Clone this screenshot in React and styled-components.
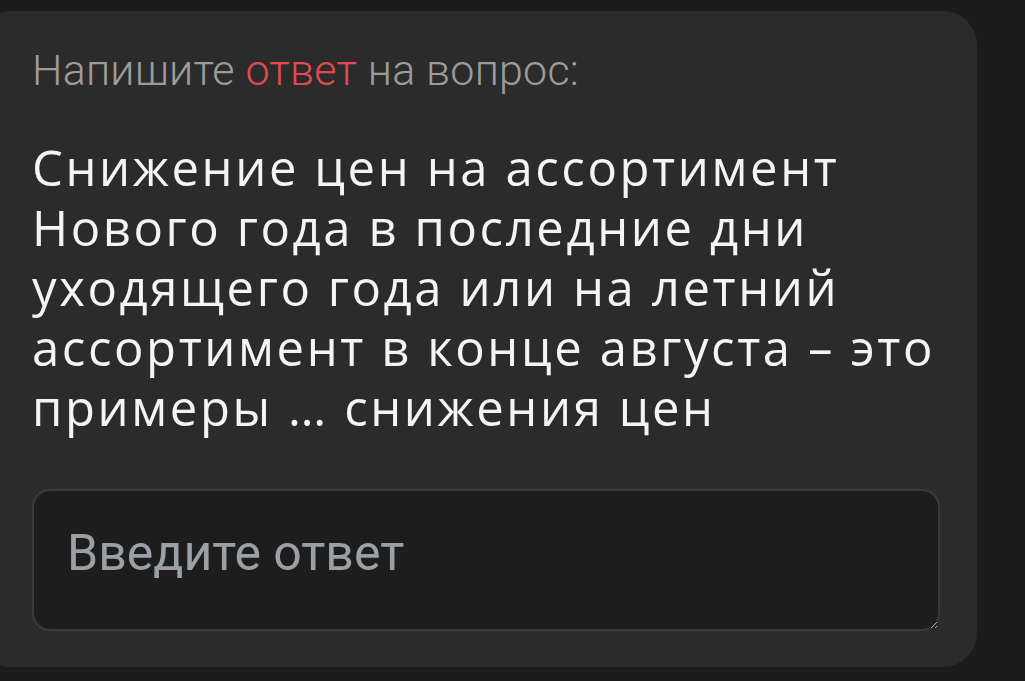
import styled, { createGlobalStyle } from "styled-components";

const GlobalStyle = createGlobalStyle`
  html, body {
    margin: 0;
    padding: 0;
    background: #1c1c1c;
    overflow: hidden;
  }
  #root {
    min-height: 681px;
  }
`;

const Page = styled.div`
  display: flex;
  align-items: flex-start;
  padding: 11px 48px 14px 0;
`;

const Card = styled.section`
  box-sizing: border-box;
  width: 1001px;
  margin-left: -24px;
  padding: 34px 37px 36px 56px;
  background: #2b2b2b;
  border-radius: 34px;
  display: flex;
  flex-direction: column;
`;

const Prompt = styled.div`
  font-family: Roboto, "Liberation Sans", sans-serif;
  font-weight: 300;
  font-size: 43px;
  line-height: 50px;
  letter-spacing: 0.2px;
  color: #9c9c9c;
`;

const Accent = styled.span`
  color: #e34a4f;
`;

const Question = styled.p`
  margin: 42px 0 52px;
  font-family: "Open Sans", "Liberation Sans", sans-serif;
  font-weight: 400;
  font-size: 49px;
  line-height: 60px;
  letter-spacing: 2.6px;
  white-space: nowrap;
  color: #f4f4f4;
`;

const Answer = styled.textarea`
  box-sizing: border-box;
  display: block;
  width: 100%;
  height: 142px;
  margin: 0;
  padding: 34px 33px;
  background: #1d1d1d;
  border: 2px solid #3a3a3a;
  border-radius: 18px;
  font-family: Roboto, "Liberation Sans", sans-serif;
  font-size: 50px;
  line-height: 56px;
  color: #e8e8e8;
  resize: vertical;
  outline: none;

  &::placeholder {
    color: #9ba0a6;
  }
`;

const lines = [
  "Снижение цен на ассортимент",
  "Нового года в последние дни",
  "уходящего года или на летний",
  "ассортимент в конце августа – это",
  "примеры … снижения цен",
];

export default function App() {
  return (
    <>
      <GlobalStyle />
      <Page>
        <Card>
          <Prompt>
            Напишите <Accent>ответ</Accent> на вопрос:
          </Prompt>
          <Question>
            {lines.map((line, i) => (
              <span key={i}>
                {line}
                {i < lines.length - 1 && <br />}
              </span>
            ))}
          </Question>
          <Answer placeholder="Введите ответ" />
        </Card>
      </Page>
    </>
  );
}
